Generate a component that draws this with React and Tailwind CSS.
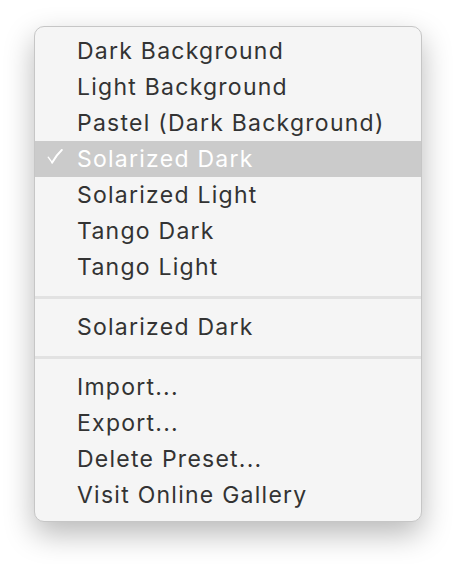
import React from "react";

const group1 = [
  "Dark Background",
  "Light Background",
  "Pastel (Dark Background)",
  "Solarized Dark",
  "Solarized Light",
  "Tango Dark",
  "Tango Light",
];
const group3 = ["Import...", "Export...", "Delete Preset...", "Visit Online Gallery"];

function Check() {
  return (
    <svg
      className="absolute left-[12px] top-[8px]"
      width="16"
      height="15"
      viewBox="0 0 16 15"
      fill="none"
    >
      <path
        d="M1.2 8.2 L5.2 13.6"
        stroke="white"
        strokeWidth="1.4"
        strokeLinecap="round"
      />
      <path
        d="M5.2 13.6 C 8 8.5, 11 4.5, 14.8 1"
        stroke="white"
        strokeWidth="2"
        strokeLinecap="round"
      />
    </svg>
  );
}

function Row({ label, selected }) {
  return (
    <div
      className={
        "h-9 flex items-center relative " +
        (selected ? "bg-[#cbcbcb] text-white" : "text-[#333333]")
      }
    >
      {selected && <Check />}
      <span className="pl-[42px]">{label}</span>
    </div>
  );
}

function Sep() {
  return (
    <div className="pt-[11px] pb-[10px]">
      <div className="h-[3px] bg-[#e2e2e2]" />
    </div>
  );
}

export default function App() {
  return (
    <div className="w-[456px] h-[564px] bg-white pt-[26px] pl-[34px]">
      <div
        className="w-[388px] h-[496px] bg-[#f5f5f5] rounded-[10px] border border-[#c6c6c6] overflow-hidden shadow-[0_12px_30px_rgba(0,0,0,0.28)] pt-[6px] text-[23px] tracking-[1.25px]"
        style={{ fontFamily: "Inter, 'Noto Sans', sans-serif" }}
      >
        {group1.map((l) => (
          <Row key={l} label={l} selected={l === "Solarized Dark"} />
        ))}
        <Sep />
        <Row label="Solarized Dark" />
        <Sep />
        {group3.map((l) => (
          <Row key={l} label={l} />
        ))}
      </div>
    </div>
  );
}
